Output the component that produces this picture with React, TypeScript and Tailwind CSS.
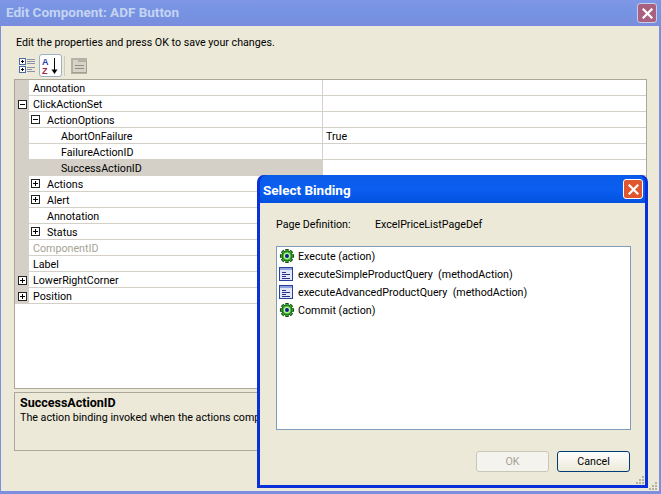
import React from 'react';

interface PropRow {
    label: string;
    depth: number;
    toggle?: 'plus' | 'minus';
    value?: string;
    disabled?: boolean;
    selected?: boolean;
}

const rows: PropRow[] = [
    { label: 'Annotation', depth: 0 },
    { label: 'ClickActionSet', depth: 0, toggle: 'minus' },
    { label: 'ActionOptions', depth: 1, toggle: 'minus' },
    { label: 'AbortOnFailure', depth: 2, value: 'True' },
    { label: 'FailureActionID', depth: 2 },
    { label: 'SuccessActionID', depth: 2, selected: true },
    { label: 'Actions', depth: 1, toggle: 'plus' },
    { label: 'Alert', depth: 1, toggle: 'plus' },
    { label: 'Annotation', depth: 1 },
    { label: 'Status', depth: 1, toggle: 'plus' },
    { label: 'ComponentID', depth: 0, disabled: true },
    { label: 'Label', depth: 0 },
    { label: 'LowerRightCorner', depth: 0, toggle: 'plus' },
    { label: 'Position', depth: 0, toggle: 'plus' },
];

const bindings = [
    { label: 'Execute (action)', icon: 'gear' },
    { label: 'executeSimpleProductQuery  (methodAction)', icon: 'method' },
    { label: 'executeAdvancedProductQuery  (methodAction)', icon: 'method' },
    { label: 'Commit (action)', icon: 'gear' },
];

function Toggle({ type }: { type: 'plus' | 'minus' }) {
    return (
        <svg width="9" height="9" viewBox="0 0 9 9" shapeRendering="crispEdges" className="block">
            <rect x="0.5" y="0.5" width="8" height="8" fill="#fff" stroke="#222" />
            <path d="M2 4.5H7" stroke="#000" />
            {type === 'plus' && <path d="M4.5 2V7" stroke="#000" />}
        </svg>
    );
}

function GearIcon() {
    return (
        <svg width="16" height="16" viewBox="0 0 17 17" className="block">
            <g stroke="#0c4a10" strokeWidth="3.6">
                <path d="M8.5 1V16M1 8.5H16M3.2 3.2L13.8 13.8M13.8 3.2L3.2 13.8" />
            </g>
            <g stroke="#46c030" strokeWidth="1.8">
                <path d="M8.5 2V15M2 8.5H15M3.9 3.9L13.1 13.1M13.1 3.9L3.9 13.1" />
            </g>
            <circle cx="8.5" cy="8.5" r="5" fill="#46c030" stroke="#0c4a10" strokeWidth="0.6" />
            <circle cx="8.5" cy="8.5" r="3.4" fill="#bdf0a0" />
            <circle cx="8.5" cy="8.5" r="2.1" fill="#0b1f8a" />
        </svg>
    );
}

function MethodIcon() {
    return (
        <svg width="14" height="14" viewBox="0 0 14 14" shapeRendering="crispEdges" className="block">
            <rect x="0.5" y="0.5" width="13" height="13" fill="#e4e8f6" stroke="#2b3f9a" />
            <rect x="1" y="1" width="12" height="2" fill="#8fa2e0" />
            <path d="M3 5.5H7M3 7.5H11M3 9.5H7M3 11.5H11" stroke="#27348b" />
        </svg>
    );
}

function CategorizedIcon() {
    return (
        <svg width="17" height="17" viewBox="0 0 17 17" shapeRendering="crispEdges" className="block">
            <rect x="0.5" y="1.5" width="6" height="6" fill="#fff" stroke="#4a6aa8" />
            <path d="M2 4.5H5M3.5 3V6" stroke="#000" />
            <rect x="0.5" y="9.5" width="6" height="6" fill="#fff" stroke="#4a6aa8" />
            <path d="M2 12.5H5M3.5 11V14" stroke="#000" />
            <path d="M8 2.5H16M8 4.5H16M8 6.5H16M8 10.5H16M8 12.5H13M8 14.5H16" stroke="#8a93a8" />
        </svg>
    );
}

function SortIcon() {
    return (
        <svg width="17" height="18" viewBox="0 0 17 18" className="block">
            <text x="0" y="8" fontSize="9" fontWeight="700" fill="#2a3fa8" fontFamily="Liberation Sans, sans-serif">A</text>
            <text x="0" y="17" fontSize="9" fontWeight="700" fill="#a02a3a" fontFamily="Liberation Sans, sans-serif">Z</text>
            <path d="M12.5 1V13" stroke="#000" strokeWidth="1" />
            <path d="M9.5 12.5H15.5L12.5 17Z" fill="#000" />
        </svg>
    );
}

function PagesIcon() {
    return (
        <svg width="16" height="16" viewBox="0 0 16 16" shapeRendering="crispEdges" className="block">
            <rect x="0" y="0" width="16" height="16" fill="#b5b2a6" />
            <rect x="1" y="3" width="14" height="11" fill="#d6d3c7" stroke="#8f8c80" strokeWidth="0.5" />
            <rect x="2" y="2" width="5" height="2" fill="#d6d3c7" />
            <path d="M3.5 7.5H12.5M3.5 10.5H12.5" stroke="#8f8c80" />
        </svg>
    );
}

function CloseGlyph() {
    return (
        <svg width="11" height="11" viewBox="0 0 11 11" className="block">
            <path d="M1.5 1.5L9.5 9.5M9.5 1.5L1.5 9.5" stroke="#fff" strokeWidth="2.2" strokeLinecap="square" />
        </svg>
    );
}

function Grip() {
    return (
        <svg width="11" height="11" viewBox="0 0 11 11" shapeRendering="crispEdges" className="block">
            <path d="M8 2h2v2H8zM5 5h2v2H5zM8 5h2v2H8zM2 8h2v2H2zM5 8h2v2H5zM8 8h2v2H8z" fill="#b5b2a4" />
        </svg>
    );
}

function PropertyRow({ row }: { row: PropRow }) {
    return (
        <div className="flex h-4">
            <div className="w-[14px] shrink-0 bg-[#d4d0c8] flex items-center justify-center">
                {row.depth === 0 && row.toggle && <Toggle type={row.toggle} />}
            </div>
            <div className={`w-[293px] shrink-0 flex items-center border-b border-[#d4d0c8] ${row.selected ? 'bg-[#d4d0c8]' : 'bg-white'} ${row.disabled ? 'text-[#a5a294]' : 'text-black'}`}>
                {row.depth === 0 && <span className="pl-[4px] pt-[3px]">{row.label}</span>}
                {row.depth === 1 && (
                    <>
                        <span className="w-[18px] pl-[2px] shrink-0">{row.toggle && <Toggle type={row.toggle} />}</span>
                        <span className="pt-[3px]">{row.label}</span>
                    </>
                )}
                {row.depth === 2 && <span className="pl-[32px] pt-[3px]">{row.label}</span>}
            </div>
            <div className="flex-1 flex items-center border-b border-l border-[#d4d0c8] bg-white pl-[3px] pt-[3px]">
                {row.value}
            </div>
        </div>
    );
}

export default function App() {
    return (
        <div className="relative w-[661px] h-[494px] overflow-hidden flex flex-col bg-[#7b8edf] text-[10.7px] leading-none text-black font-['Roboto',sans-serif]">
            <div className="h-[26px] shrink-0 flex items-center justify-between pl-[6px] pr-[4px] bg-gradient-to-b from-[#7f96e6] via-[#7593e2] to-[#7a8ddd]">
                <span className="text-[13.5px] font-bold text-[#c5d3f3]">Edit Component: ADF Button</span>
                <div className="w-5 h-5 rounded-[3px] border border-[#c7cfe8] bg-[#a9617f] flex items-center justify-center">
                    <CloseGlyph />
                </div>
            </div>

            <div className="relative flex-1 ml-px mr-[2px] mb-[3px] bg-[#ece9d8] flex flex-col px-[13px]">
                <p className="mt-[12px] ml-[2px] h-[12px]">Edit the properties and press OK to save your changes.</p>

                <div className="mt-[4px] h-[23px] flex items-center ml-[5px]">
                    <CategorizedIcon />
                    <div className="ml-[3px] w-[23px] h-[23px] rounded-[3px] border border-[#9bb0c9] bg-white flex items-center justify-center">
                        <SortIcon />
                    </div>
                    <div className="ml-[2px] w-px h-[20px] bg-[#cfcbb8]" />
                    <div className="ml-[6px]"><PagesIcon /></div>
                </div>

                <div className="mt-[2px] h-[310px] w-[633px] border border-[#aca899] bg-white">
                    {rows.map((row, i) => <PropertyRow key={i} row={row} />)}
                </div>

                <div className="mt-[3px] h-[59px] w-[633px] border border-[#aca899] px-[5px] pt-[4px]">
                    <div className="font-bold text-[12.5px] h-[14px]">SuccessActionID</div>
                    <div className="mt-[2px] whitespace-nowrap">The action binding invoked when the actions complete successfully.</div>
                </div>

                <div className="absolute right-[1px] bottom-0"><Grip /></div>
            </div>

            {/* Select Binding dialog sits on top of the property editor */}
            <div className="absolute left-[257px] top-[175px] w-[391px] h-[313px] flex flex-col rounded-t-[7px] bg-[#0831d9] border-x-[3px] border-b-[3px] border-[#0831d9]">
                <div className="h-[28px] shrink-0 flex items-center justify-between pl-[3px] pr-[2px] rounded-t-[7px] bg-gradient-to-b from-[#0a5be8] via-[#0a5ef0] to-[#0352e0]">
                    <span className="text-[13.5px] font-bold text-white pt-[3px]">Select Binding</span>
                    <div className="w-5 h-5 rounded-[3px] border border-white bg-[#e0562f] flex items-center justify-center">
                        <CloseGlyph />
                    </div>
                </div>
                <div className="relative flex-1 bg-[#ece9d8] flex flex-col px-[16px]">
                    <div className="mt-[17px] h-[13px] flex">
                        <span className="w-[99px]">Page Definition:</span>
                        <span>ExcelPriceListPageDef</span>
                    </div>
                    <div className="mt-[13px] h-[184px] w-[355px] border border-[#7f9db9] bg-white px-[2px]">
                        {bindings.map((b) => (
                            <div key={b.label} className="h-[18px] flex items-center">
                                <div className="w-[18px] shrink-0 flex justify-start">
                                    {b.icon === 'gear' ? <GearIcon /> : <MethodIcon />}
                                </div>
                                <span className="ml-[1px] pt-[3px] whitespace-pre">{b.label}</span>
                            </div>
                        ))}
                    </div>
                    <div className="mt-[21px] flex justify-end gap-[8px] w-[354px]">
                        <button className="w-[73px] h-[21px] pt-px rounded-[3px] border border-[#c9c7ba] bg-[#f4f3ee] text-[#a5a294]">OK</button>
                        <button className="w-[73px] h-[21px] pt-px rounded-[3px] border border-[#003c74] bg-gradient-to-b from-white to-[#ece9d8] text-black">Cancel</button>
                    </div>
                    <div className="absolute right-0 bottom-0"><Grip /></div>
                </div>
            </div>
        </div>
    );
}
